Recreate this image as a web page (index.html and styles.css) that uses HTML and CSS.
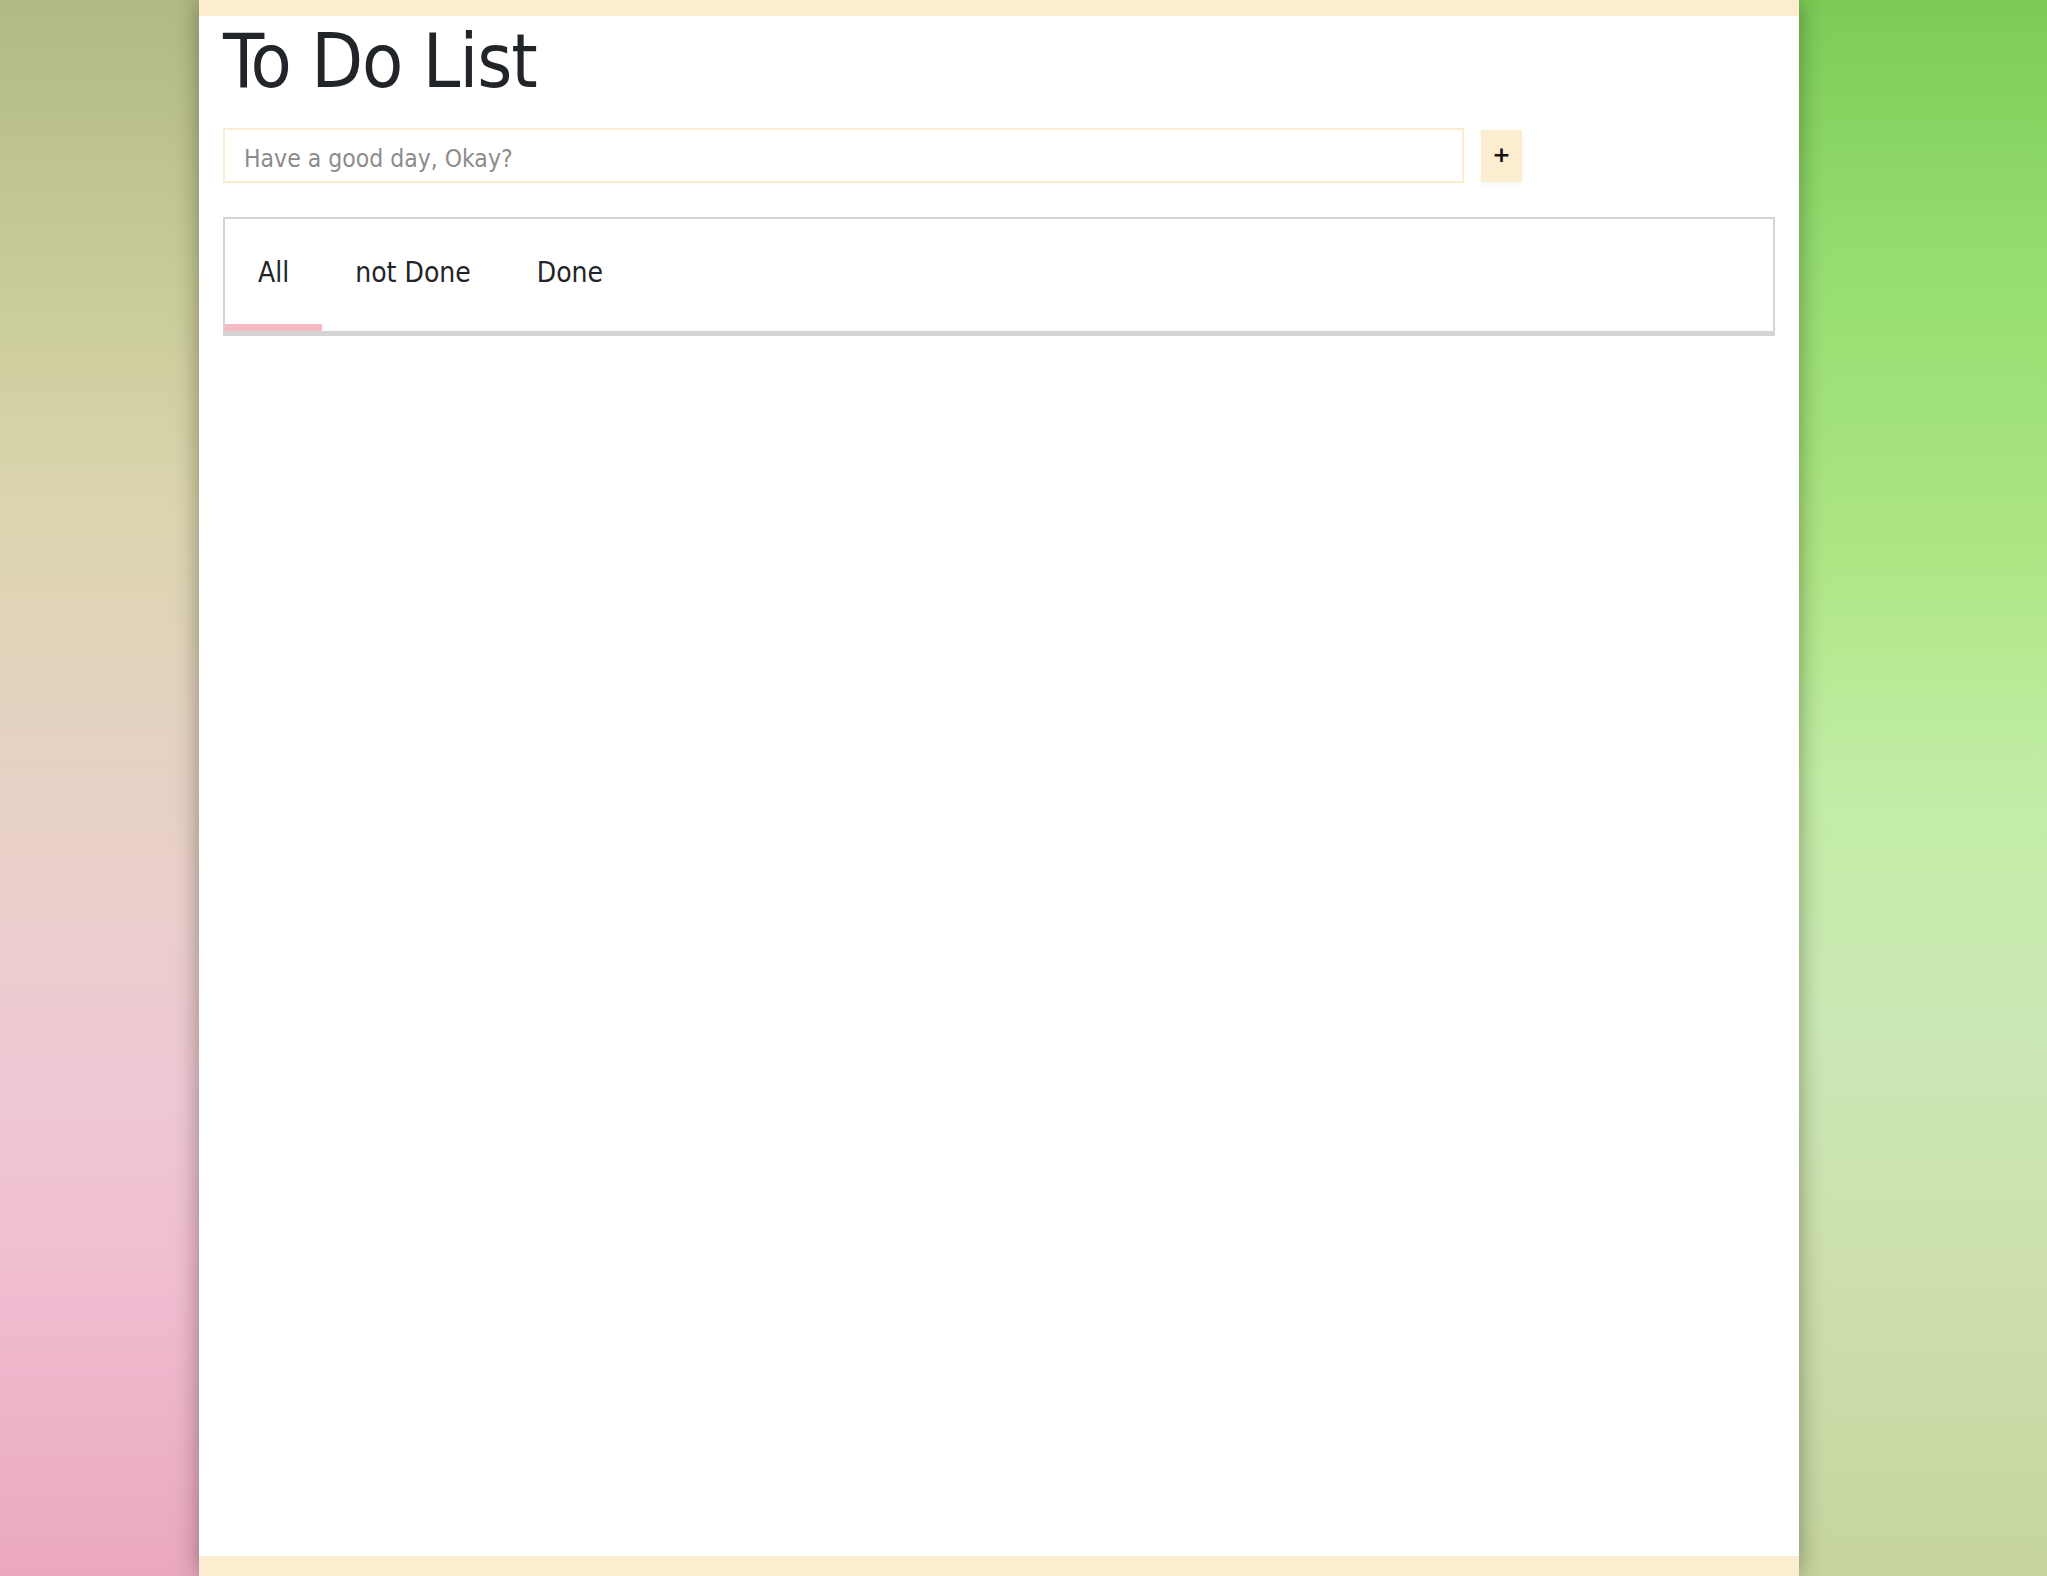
FILE: index.html
```html
<!DOCTYPE html>
<html lang="en">
<head>
<meta charset="utf-8">
<title>To Do List</title>
<link rel="stylesheet" href="styles.css">
</head>
<body>
<div class="backdrop">
  <main class="page">
    <h1 class="title">To Do List</h1>
    <div class="entry">
      <input class="entry-input" type="text" placeholder="Have a good day, Okay?">
      <button class="entry-add" type="button">+</button>
    </div>
    <section class="tabs-box">
      <div class="tabs">
        <div class="tab tab-active">All</div>
        <div class="tab">not Done</div>
        <div class="tab">Done</div>
      </div>
    </section>
  </main>
</div>
</body>
</html>
```

FILE: styles.css
```css
html, body {
  margin: 0;
  padding: 0;
  height: 100%;
}

body {
  font-family: "DejaVu Sans Condensed", "Liberation Sans Narrow", "DejaVu Sans", sans-serif;
  font-stretch: condensed;
  color: #212529;
  overflow: hidden;
}

.backdrop {
  height: 100vh;
  display: flex;
  background:
    linear-gradient(180deg, #b1b985 0%, #c9cc98 18%, #dbd5ae 32%, #e4d3c0 45%, #ebcfcd 58%, #efc7d5 70%, #f0bcd0 82%, #eaa8c0 100%) left top / 50% 100% no-repeat,
    linear-gradient(180deg, #7ccb57 0%, #93dc6e 15%, #ade683 35%, #c2eda6 50%, #cbe9b5 65%, #cde0ad 80%, #c6d59f 100%) right top / 50% 100% no-repeat;
}

.page {
  box-sizing: border-box;
  margin-left: 199px;
  width: 1600px;
  height: 100%;
  background: #ffffff;
  border-top: 16px solid #fcecd0;
  border-bottom: 20px solid #fcecd0;
  padding: 0 24px;
  box-shadow: 0 0 22px rgba(40, 40, 20, 0.45);
}

.title {
  margin: 0;
  padding-top: 0;
  font-size: 75px;
  font-weight: 400;
  line-height: 90px;
  letter-spacing: -1px;
}

.entry {
  display: flex;
  align-items: flex-start;
  gap: 17px;
  margin-top: 22px;
}

.entry-input {
  box-sizing: border-box;
  width: 1241px;
  height: 55px;
  border: 2px solid #fcecd0;
  padding: 6px 19px 0;
  font-family: inherit;
  font-stretch: condensed;
  font-size: 24.5px;
  color: #212529;
  background: #fff;
  outline: none;
}

.entry-input::placeholder {
  color: #8c8c8c;
}

.entry-add {
  box-sizing: border-box;
  width: 41px;
  height: 52px;
  margin-top: 2px;
  border: none;
  background: #fcecd0;
  font-family: "DejaVu Sans", sans-serif;
  font-size: 22px;
  font-weight: 700;
  color: #111;
  padding: 0 0 4px;
  box-shadow: 0 3px 4px rgba(0, 0, 0, 0.04);
}

.tabs-box {
  margin-top: 34px;
  border: 2px solid #d4d4d4;
  border-bottom-width: 3px;
}

.tabs {
  display: flex;
  height: 112px;
  border-bottom: 2px solid #d4d4d4;
}

.tab {
  display: flex;
  align-items: center;
  padding: 2px 33px 0;
  font-size: 28px;
  border-bottom: 7px solid transparent;
}

.tab-active {
  border-bottom-color: #f4b9c4;
}
```
